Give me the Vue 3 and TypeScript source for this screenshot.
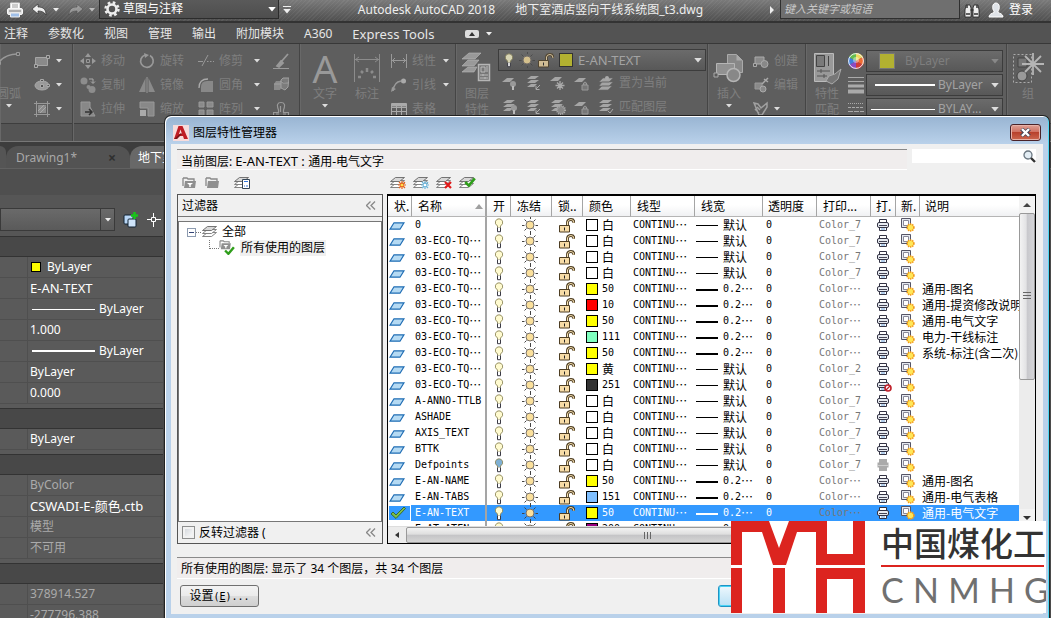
<script setup lang="ts">
import { ref } from 'vue'

interface Layer {
  name: string
  cut?: boolean
  color: string
  colorName: string
  weight: string
  plot: string
  desc?: string
  off?: boolean
  noPlot?: boolean
  grayPlot?: boolean
  current?: boolean
}

const white = { color: '#ffffff', colorName: '白', weight: '', plot: '_7' }
const eco = { name: '03-ECO-TQ', cut: true }
const yellow = { color: '#ffff00', colorName: '50', weight: '0.2', plot: '' }

const layers: Layer[] = [
  { name: '0', ...white },
  { ...eco, ...white },
  { ...eco, ...white },
  { ...eco, ...white },
  { ...eco, ...yellow, desc: '通用-图名' },
  { ...eco, color: '#ff0000', colorName: '10', weight: '0.2', plot: '', desc: '通用-提资修改说明' },
  { ...eco, ...yellow, desc: '通用-电气文字' },
  { ...eco, color: '#7fffbf', colorName: '111', weight: '0.2', plot: '', desc: '电力-干线标注' },
  { ...eco, ...yellow, desc: '系统-标注(含二次)' },
  { ...eco, color: '#ffff00', colorName: '黄', weight: '', plot: '_2' },
  { ...eco, color: '#333333', colorName: '251', weight: '', plot: '', noPlot: true },
  { name: 'A-ANNO-TTLB', ...white },
  { name: 'ASHADE', ...white },
  { name: 'AXIS_TEXT', ...white },
  { name: 'BTTK', ...white },
  { name: 'Defpoints', ...white, off: true, grayPlot: true },
  { name: 'E-AN-NAME', ...yellow, desc: '通用-图名' },
  { name: 'E-AN-TABS', color: '#7fbfff', colorName: '151', weight: '0.2', plot: '', desc: '通用-电气表格' },
  { name: 'E-AN-TEXT', ...yellow, desc: '通用-电气文字', current: true },
  { name: 'E-AT-ATEN', color: '#99007f', colorName: '200', weight: '0.2', plot: '' },
]

const headers = ['状.', '名称', '开', '冻结', '锁..', '颜色', '线型', '线宽', '透明度', '打印...', '打.', '新.', '说明']
const menus = ['注释', '参数化', '视图', '管理', '输出', '附加模块', 'A360', 'Express Tools']

const modify = [
  { icon: 'move', label: '移动' }, { icon: 'rotate', label: '旋转' }, { icon: 'trim', label: '修剪', drop: true }, { icon: 'erase', label: '' },
  { icon: 'copy', label: '复制' }, { icon: 'mirror', label: '镜像' }, { icon: 'fillet', label: '圆角', drop: true }, { icon: 'explode', label: '' },
  { icon: 'stretch', label: '拉伸' }, { icon: 'scale', label: '缩放' }, { icon: 'array', label: '阵列', drop: true }, { icon: 'offset', label: '' },
]
const annotate = [
  { icon: 'linear', label: '线性', drop: true },
  { icon: 'leader', label: '引线', drop: true },
  { icon: 'tablei', label: '表格', drop: false },
]
const layerTools = ['lay-bulb', 'lay-iso', 'lay-frz', 'lay-lock', 'lay-cur']
const layerTools2 = ['lay-on', 'lay-iso', 'lay-thaw', 'lay-lock', 'lay-match']

interface Prop { text: string; line?: number; swatch?: boolean; dim?: boolean; wide?: boolean }
const groups: Prop[][] = [
  [
    { text: 'ByLayer', swatch: true }, { text: 'E-AN-TEXT', wide: true }, { text: 'ByLayer', line: 1 }, { text: '1.000' },
    { text: 'ByLayer', line: 2 }, { text: 'ByLayer' }, { text: '0.000' },
  ],
  [{ text: 'ByLayer' }],
  [{ text: 'ByColor', dim: true }, { text: 'CSWADI-E-颜色.ctb', wide: true }, { text: '模型', dim: true }, { text: '不可用', dim: true }],
  [{ text: '378914.527', dim: true }, { text: '-277796.388', dim: true }],
]

const keyword = ref('')
const layerSearch = ref('')
const invert = ref(false)
</script>

<template>
  <div class="app">
    <svg class="sprite" aria-hidden="true">
      <symbol id="tri" viewBox="0 0 6 4"><path d="M0 0h6L3 3.5z" fill="currentColor" /></symbol>
      <symbol id="printer" viewBox="0 0 16 16">
        <path d="M3.5 1h9v6h-9z" fill="#fff" stroke="#ddd" /><path d="M5 3h6M5 5h6" stroke="#999" />
        <rect x=".5" y="6.5" width="15" height="6" rx="1.5" fill="#e4e4e4" stroke="#f8f8f8" /><path d="M2 9h12" stroke="#777" />
        <path d="M3.5 11h9v4h-9z" fill="#9fbfe8" stroke="#eee" />
      </symbol>
      <symbol id="undo" viewBox="0 0 16 14"><path d="M1 6l6-5v3c5 0 8 2 8 8-2-3-4-4-8-4v3z" fill="#eee" stroke="#333" stroke-width=".7" /></symbol>
      <symbol id="gear" viewBox="0 0 16 16">
        <circle cx="8" cy="8" r="6.5" fill="none" stroke="#eee" stroke-width="2.4" stroke-dasharray="2.6 2.5" />
        <circle cx="8" cy="8" r="4.5" fill="none" stroke="#eee" stroke-width="2.6" />
      </symbol>
      <symbol id="binoc" viewBox="0 0 16 16">
        <path d="M2 3h4l1 3v9H1V8zM14 3h-4L9 6v9h6V8z" fill="#eee" stroke="#222" stroke-width=".8" /><path d="M2 12h4M10 12h4M3 3v3M13 3v3M6.500 8h3" stroke="#333" stroke-width="1.500" />
      </symbol>
      <symbol id="user" viewBox="0 0 16 16">
        <path d="M1 15c0-3 3-3.500 5-4.500V9C4 7 4 1 8 1s4 6 2 8v1.500c2 1 5 1.500 5 4.500z" fill="#dfe3e8" stroke="#fff" />
      </symbol>
      <symbol id="arc" viewBox="0 0 24 16" preserveAspectRatio="xMidYMin"><path d="M1 13C6 7 13 4 20 4" fill="none" stroke="#999" stroke-width="1.500" /><path d="M19.500 2.500h3v3h-3zM.5 11.500h3v3h-3z" fill="#5b5b5b" stroke="#999" /></symbol>
      <symbol id="rect" viewBox="0 0 16 16"><path d="M1.500 4.500h12v8h-12z" fill="#8a8a8a" stroke="#a5a5a5" /><path d="M12.500 2.500h3v3h-3zM.5 11.500h3v3h-3z" fill="#5b5b5b" stroke="#aaa" /></symbol>
      <symbol id="ellipse" viewBox="0 0 16 16"><ellipse cx="8" cy="8.500" rx="7" ry="4.500" fill="#999" stroke="#aaa" /><path d="M6.500 7.500h3v3h-3zM6.500 2.500h3v2h-3zM13 7.500h2.500v2H13z" fill="#555" stroke="#aaa" /></symbol>
      <symbol id="hatch" viewBox="0 0 16 16"><path d="M2.500 0v16M13.500 0v16M0 2.500h16M0 13.500h16" stroke="#999" /><path d="M4 4h8v8H4z" fill="#8c8c8c" /><path d="M4 10l6-6M6 12l6-6" stroke="#aaa" /></symbol>
      <symbol id="move" viewBox="0 0 16 16"><path d="M8 0l3 4H5zM8 16l3-4H5zM0 8l4-3v6zM16 8l-4-3v6z" fill="#999" /><path d="M6.500 6.500h3v3h-3z" fill="none" stroke="#999" /></symbol>
      <symbol id="copy" viewBox="0 0 16 16"><circle cx="4" cy="4" r="3.500" fill="#8d8d8d" /><circle cx="8.500" cy="10" r="2" fill="#8d8d8d" /><circle cx="12" cy="12.500" r="3.500" fill="#8d8d8d" /><path d="M9 2h4v4M11 4.500l2 2 2-2" fill="none" stroke="#aaa" /></symbol>
      <symbol id="stretch" viewBox="0 0 16 16"><path d="M1 1h9v5l5 9H1z" fill="#888" stroke="#999" /><path d="M5 11h7M9 8l3 3-3 3" stroke="#333" fill="none" stroke-width="1.500" /></symbol>
      <symbol id="rotate" viewBox="0 0 16 16"><path d="M6 2a6.300 6.300 0 1 0 5 .5" fill="none" stroke="#999" stroke-width="1.700" /><path d="M5 0l5 2-4 3z" fill="#999" /></symbol>
      <symbol id="mirror" viewBox="0 0 16 16"><path d="M6.500 1v14H0zM9.500 1v14H16z" fill="#8a8a8a" /><path d="M8 0v16" stroke="#999" /></symbol>
      <symbol id="scale" viewBox="0 0 16 16"><path d="M1 1h14v14H9V7H1z" fill="#888" stroke="#999" /><path d="M1 9h6v6H1z" fill="#aaa" /></symbol>
      <symbol id="trim" viewBox="0 0 16 16"><path d="M0 8.500h5M9 8.500h1.500M12 8.500h1.500M15 8.500h1M4 13L10 2" stroke="#999" /></symbol>
      <symbol id="fillet" viewBox="0 0 16 16"><path d="M3 15V10q0-6 6-6h6v11z" fill="#888" /><path d="M1 11Q1 2 10 2" fill="none" stroke="#aaa" stroke-width="1.300" /></symbol>
      <symbol id="array" viewBox="0 0 16 16"><path d="M1 1h5v5H1zM9 1h6v5H9zM1 9h5v6H1zM9 9h6v6H9z" fill="#8a8a8a" stroke="#999" /></symbol>
      <symbol id="erase" viewBox="0 0 16 16"><path d="M15 1L8 9M8 8l2 2-4 4-2-1z" stroke="#999" stroke-width="1.800" fill="#999" /><path d="M0 15.500h16" stroke="#999" /></symbol>
      <symbol id="explode" viewBox="0 0 16 16"><path d="M1 7l2-3h6v6l-2 3H1z" fill="#8a8a8a" /><path d="M8 3l2-2h6l-1 9-3 3-4-2zM1 7h7M7 4L10 6h5" fill="#7c7c7c" stroke="#a0a0a0" /></symbol>
      <symbol id="offset" viewBox="0 0 16 16"><path d="M.5 14.500v-3h5V9Q2.500 1.500 8 1.500T10.500 9v2.500h5v3zM3 13h3M10 13h3M7.500 11V5" fill="none" stroke="#999" stroke-width="1.200" /></symbol>
      <symbol id="linear" viewBox="0 0 16 16"><path d="M.5 1v14M15.500 1v14M1 7.500h14M4 5L1.500 7.500 4 10M12 5l2.500 2.500L12 10" fill="none" stroke="#999" /></symbol>
      <symbol id="leader" viewBox="0 0 16 16"><path d="M2 14Q3 5 10 4" fill="none" stroke="#999" stroke-width="1.500" /><circle cx="12.500" cy="4" r="2.500" fill="#aaa" /><path d="M0 15l1-5 4 2z" fill="#999" /></symbol>
      <symbol id="tablei" viewBox="0 0 16 16"><path d="M.5 2.500h15v12H.5zM1 6.500h14M1 10.500h14M5.500 5v9M10.500 5v9" fill="none" stroke="#aaa" /><path d="M1 3h14v2.500H1z" fill="#aaa" /></symbol>
      <symbol id="dim" viewBox="0 0 28 30"><path d="M1.500 1v28M26.500 1v28M2 6.500h24M6 4L2.500 6.500 6 9M22 4l3.500 2.500L22 9" fill="none" stroke="#8c8c8c" /><path d="M14 15v4M8 18l2 2M20 18l-2 2M5 24h3M20 24h3" stroke="#8c8c8c" stroke-width="2.500" /></symbol>
      <symbol id="stack" viewBox="0 0 32 32">
        <path d="M8 1h12l-6 6H1zM7 8h11l-5 6H1zM7 15h9l-3 5H1z" fill="#999" stroke="#bbb" stroke-width=".6" />
        <path d="M17.500 12.500h11v16h-11z" fill="#777" stroke="#b5b5b5" stroke-width="1.500" /><path d="M20 15h4v5h-4zM26 14v6M19 23h8M19 26h8M22 22v2M24 25v2" fill="none" stroke="#bbb" />
      </symbol>
      <symbol id="lay-bulb" viewBox="0 0 16 16"><path d="M5 3h7l-4 4H0z" fill="#a5a5a5" /><circle cx="11" cy="9" r="3" fill="#999" /><path d="M11 11v4" stroke="#bbb" stroke-width="2" /></symbol>
      <symbol id="lay-iso" viewBox="0 0 16 16"><path d="M5 1h8L9 4H1zM5 5h8l-4 3H1zM5 9h6l-3 3H1z" fill="#a5a5a5" /><path d="M14 10l-4 4m0-3v3.500h3.500" stroke="#aaa" fill="none" /></symbol>
      <symbol id="lay-frz" viewBox="0 0 16 16"><path d="M5 2h7L8 6H0z" fill="#a5a5a5" /><path d="M10 6v9M5.500 10.500h9M7 7.500l6 6M13 7.500l-6 6" stroke="#aaa" stroke-width="1.300" /></symbol>
      <symbol id="lay-lock" viewBox="0 0 16 16"><path d="M5 3h7L8 7H0z" fill="#a5a5a5" /><path d="M8 10h6v5H8zM9.500 10V8q1.500-2 3 0v2" fill="#777" stroke="#999" /></symbol>
      <symbol id="lay-cur" viewBox="0 0 16 16"><path d="M5 3h10l-4 4H1zM4 7h11l-4 4H1zM4 11h10l-4 4H0z" fill="#a5a5a5" stroke="#666" stroke-width=".6" /><circle cx="9" cy="3" r="2" fill="#aaa" /></symbol>
      <symbol id="lay-on" viewBox="0 0 16 16"><path d="M5 1h8L9 4H1zM5 5h8l-4 3H1zM5 9h6l-3 3H1z" fill="#a5a5a5" /><circle cx="12" cy="9" r="3" fill="#999" /><path d="M12 11v4" stroke="#bbb" stroke-width="2" /></symbol>
      <symbol id="lay-thaw" viewBox="0 0 16 16"><path d="M5 1h8L9 4H1zM5 5h8l-4 3H1zM5 9h6l-3 3H1z" fill="#a5a5a5" /><circle cx="11" cy="11" r="4" fill="#888" stroke="#aaa" stroke-dasharray="1 1" stroke-width="2" /></symbol>
      <symbol id="lay-match" viewBox="0 0 16 16"><path d="M5 1h9l-4 3H1zM5 5h9l-4 3H1zM5 9h8l-4 3H1z" fill="#a5a5a5" /><path d="M10 12l2 2 3-4" stroke="#aaa" fill="none" /></symbol>
      <symbol id="insert" viewBox="0 0 32 30"><path d="M14.500 1.500h9l6 6v12h-15z" fill="#888" stroke="#aaa" /><path d="M23.500 1.500v6h6z" fill="#aaa" /><path d="M3.500 10.500h18v11h-18z" fill="#919191" stroke="#b5b5b5" /><circle cx="20.500" cy="22" r="6.500" fill="#888" stroke="#b5b5b5" stroke-width="1.500" /><path d="M1 20h4v4H1z" fill="#5b5b5b" stroke="#aaa" /></symbol>
      <symbol id="create" viewBox="0 0 16 16"><path d="M2 4h9v7H2z" fill="#8a8a8a" stroke="#aaa" /><circle cx="11.500" cy="11" r="3.500" fill="#888" stroke="#aaa" /><path d="M.5 10.500h3v3h-3z" fill="#5b5b5b" stroke="#aaa" /></symbol>
      <symbol id="edit" viewBox="0 0 16 16"><path d="M2 6h7v6H2z" fill="#8a8a8a" stroke="#999" /><circle cx="10" cy="12" r="3" fill="#888" stroke="#aaa" /><path d="M9 7l6-6M11 2l4 3" stroke="#aaa" stroke-width="1.500" /></symbol>
      <symbol id="attr" viewBox="0 0 16 16"><path d="M1 2l4 1 3 4 6-5v4l-5 8H6zM2 8l4 4M4 6l3 3" fill="none" stroke="#a0a0a0" stroke-width="1.500" /></symbol>
      <symbol id="match" viewBox="0 0 32 32"><path d="M3.500 1.500h19v28h-19z" fill="#999" stroke="#bbb" /><path d="M5.500 3.500h8v11h-8zM17.500 4v10" fill="#7a7a7a" stroke="#444" /><path d="M6 19h13M6 24h10M10 17v4M13 22v4" stroke="#555" /><path d="M30 17l-6 5-6 2-3 5 6 3 6-5z" fill="#777" stroke="#aaa" /></symbol>
      <symbol id="group" viewBox="0 0 32 32"><path d="M1.500 2.500h18v28h-18z" fill="none" stroke="#aaa" stroke-dasharray="2 2" /><path d="M6 6h9v9H6z" fill="#777" stroke="#444" /><circle cx="10" cy="24" r="5" fill="#999" stroke="#444" /><path d="M21 1v22M10 12h22M13 4l16 16M29 4L13 20" stroke="#b5b5b5" stroke-width="1.800" /></symbol>
      <symbol id="wheel" viewBox="0 0 16 16">
        <path d="M8 8V0a8 8 0 0 1 7 4z" fill="#efd95c" /><path d="M8 8l7-4a8 8 0 0 1 0 8z" fill="#f06b32" /><path d="M8 8l7 4a8 8 0 0 1-7 4z" fill="#d23a3a" />
        <path d="M8 8v8a8 8 0 0 1-7-4z" fill="#8b4bc4" /><path d="M8 8l-7 4a8 8 0 0 1 0-8z" fill="#3d7fe0" /><path d="M8 8L1 4a8 8 0 0 1 7-4z" fill="#65bd4d" /><circle cx="8" cy="8" r="7.400" fill="none" stroke="#eee" /><circle cx="8" cy="7" r="3" fill="#fff" opacity=".4" />
      </symbol>
      <symbol id="lw" viewBox="0 0 16 18"><path d="M0 1.500h16M0 5.500h16" stroke="#aaa" /><path d="M0 10h16" stroke="#aaa" stroke-width="3" /><path d="M0 15.500h16" stroke="#aaa" stroke-width="4" /></symbol>
      <symbol id="lt" viewBox="0 0 16 16"><path d="M0 2.500h16" stroke="#aaa" stroke-dasharray="1 1" /><path d="M0 6.500h16" stroke="#aaa" stroke-dasharray="3 1" /><path d="M0 10.500h16" stroke="#aaa" stroke-dasharray="5 1" /><path d="M0 14.500h16" stroke="#aaa" /></symbol>
      <symbol id="bulb" viewBox="0 0 10 15"><path d="M3.500 9.500V8Q.5 6 1.500 3.200 2.500 .8 5 .8t3.500 2.400Q9.500 6 6.500 8v1.500z" fill="var(--b, #fffbd0)" stroke="#8d8758" stroke-width=".9" /><path d="M3.500 9.500v4.200h3V9.500" fill="#fff" stroke="#3a3a44" /></symbol>
      <symbol id="sun" viewBox="0 0 16 16"><path d="M8.500 0v2M8.500 14v2M0 8.500h2.500M13.500 8.500H16M2.500 2.500l2 2M13.500 2.500l-2 2M2.500 13.500l2-2M13.500 13.500l-2-2" stroke="#444" /><circle cx="8" cy="8" r="4" fill="#fbe09c" stroke="#77706a" /></symbol>
      <symbol id="lock" viewBox="0 0 16 15"><path d="M8.500 7V4Q9 1.500 12 1.500T15 5" fill="none" stroke="#4d3d22" stroke-width="2.800" /><path d="M8.500 7V4Q9 1.500 12 1.500T15 5" fill="none" stroke="#f5dfae" stroke-width="1" /><path d="M.5 7.500h10v6.500H.5z" fill="#f7dca6" stroke="#4d3d22" /><path d="M5.500 9.500v3" stroke="#222" /></symbol>
      <symbol id="sheet" viewBox="0 0 16 8"><path d="M5 .8h10L11 7.200H1z" fill="#b5daf3" stroke="#1f6db4" stroke-width="1.200" /></symbol>
      <symbol id="check" viewBox="0 0 16 12"><path d="M1 7l2-2 3 3 8-8 1.500 1.500L6 11.500z" fill="#7cbf4c" stroke="#2c5b1a" stroke-width=".8" /></symbol>
      <symbol id="prn" viewBox="0 0 12 12"><path d="M2.500 3.500v-3h7v3M2.500 8.500v3h7v-3" fill="#fff" stroke="#334" /><rect x=".5" y="3.500" width="11" height="5" rx="1.500" fill="#e8ecf2" stroke="#334" /><path d="M2 6.500h8" stroke="#445" /><path d="M4 10h4" stroke="#6b9fd8" /></symbol>
      <symbol id="prngray" viewBox="0 0 12 12"><path d="M2 0h8v3.500h1.500v5H10V12H2V8.500H.5v-5H2z" fill="#aaa" /><path d="M1 6.500h10" stroke="#ccc" /></symbol>
      <symbol id="ban" viewBox="0 0 8 8"><circle cx="4" cy="4" r="3" fill="#fff" stroke="#c0202a" stroke-width="1.600" /><path d="M6 2L2 6" stroke="#c0202a" stroke-width="1.300" /></symbol>
      <symbol id="vp" viewBox="0 0 14 14"><path d="M.5.500h9v9h-9z" fill="#e5e9f0" stroke="#556" /><path d="M2.500 2.500h5v5h-5z" fill="#fff" stroke="#889" /><circle cx="9.500" cy="9.500" r="3.300" fill="#ffd52a" stroke="#f29a1c" stroke-dasharray="1.300 .8" stroke-width="1.800" /><circle cx="9.500" cy="9.500" r="2.500" fill="#ffe75a" /></symbol>
      <symbol id="folder" viewBox="0 0 14 12"><path d="M1 1h4l1 1h6v2M1 1v8" fill="none" stroke="#888" stroke-width="1.300" /><path d="M3 4h11l-1 7H2z" fill="#8f8f8f" /></symbol>
      <symbol id="folderf" viewBox="0 0 14 12"><path d="M1 1h4l1 1h6v2M1 1v8" fill="none" stroke="#888" stroke-width="1.300" /><path d="M3 4h11l-1 7H2z" fill="#8f8f8f" /><path d="M5 6h6L8.700 8v2H7.300V8z" fill="#fff" /></symbol>
      <symbol id="lyr" viewBox="0 0 18 14"><path d="M6.500 7.500h9l-5 4H1.500z" fill="#fff" stroke="#777" stroke-width=".9" /><path d="M6.500 4.500h9l-5 4H1.500z" fill="#fff" stroke="#777" stroke-width=".9" /><path d="M6.500 1.500h9l-5 4H1.500z" fill="#d8d8d8" stroke="#666" stroke-width=".9" /></symbol>
      <symbol id="spark" viewBox="0 0 8 8"><path d="M4 0v8M0 4h8M1 1l6 6M7 1L1 7" stroke="currentColor" stroke-width="1.200" /><circle cx="4" cy="4" r="1.300" fill="var(--core, #fff)" /></symbol>
      <symbol id="xmark" viewBox="0 0 8 8"><path d="M1 1l6 6M7 1L1 7" stroke="#e21b1b" stroke-width="2.200" /></symbol>
      <symbol id="tick" viewBox="0 0 10 8"><path d="M1 4l3 3 5-6" fill="none" stroke="#2f9e1b" stroke-width="2.200" /></symbol>
      <symbol id="cfg" viewBox="0 0 8 10"><path d="M.5.500h7v9h-7z" fill="#fff" stroke="#345" /><path d="M2 2.500h4M2 7h1M4 7h2" stroke="#37d" /></symbol>
      <symbol id="lens" viewBox="0 0 13 13"><circle cx="5" cy="5" r="4" fill="#e3edf4" stroke="#6a7680" stroke-width="1.300" /><path d="M8 8l4 4" stroke="#333" stroke-width="2.400" /></symbol>
      <symbol id="chev" viewBox="0 0 10 9"><path d="M4.500.500l-4 4 4 4M9 .5l-4 4 4 4" fill="none" stroke="#888" stroke-width="1.300" /></symbol>
      <symbol id="acad" viewBox="0 0 16 16"><path d="M0 0h16v16H0z" fill="#f7dcdc" /><path d="M5.500 1h4L15 14h-4l-1-3H5l-1 3H1zM7.500 4.500L6 9h3z" fill="#bf1d25" fill-rule="evenodd" /><path d="M1 14l7-6 1 1-5 5z" fill="#7e1016" /></symbol>
      <symbol id="quick" viewBox="0 0 16 16"><rect x="1" y="3" width="9" height="9" rx="1" fill="#b9d6f5" stroke="#123" /><rect x="5" y="7" width="8" height="8" rx="1" fill="#cfe4fa" stroke="#123" /><path d="M11.500 0v7M8 3.500h7" stroke="#19c419" stroke-width="2.500" /></symbol>
      <symbol id="cross" viewBox="0 0 14 14"><path d="M6.500 0v4M6.500 9v5M0 6.500h4M9 6.500h5M4.500 4.500h4v4h-4z" fill="none" stroke="#fff" /></symbol>
    </svg>

    <header class="title">
      <button class="tb" aria-label="打印"><svg width="16" height="16"><use href="#printer" /></svg></button>
      <button class="tb undo" aria-label="放弃"><svg width="16" height="14"><use href="#undo" /></svg></button>
      <svg class="tri" width="6" height="4"><use href="#tri" /></svg>
      <button class="tb redo" aria-label="重做"><svg width="16" height="14"><use href="#undo" /></svg></button>
      <svg class="tri dimtri" width="6" height="4"><use href="#tri" /></svg>
      <div class="ws">
        <svg width="16" height="16"><use href="#gear" /></svg>
        <select aria-label="工作空间"><option>草图与注释</option></select>
        <svg width="8" height="5"><use href="#tri" /></svg>
      </div>
      <button class="tb custom" aria-label="自定义"><i></i><svg width="8" height="5"><use href="#tri" /></svg></button>
      <div class="caption"><span>Autodesk AutoCAD 2018</span><span>地下室酒店竖向干线系统图_t3.dwg</span></div>
      <i class="play"></i>
      <input v-model="keyword" class="kw" placeholder="键入关键字或短语" aria-label="搜索">
      <svg class="bin" width="16" height="16"><use href="#binoc" /></svg>
      <button class="login"><svg width="16" height="16"><use href="#user" /></svg>登录</button>
    </header>

    <nav class="menu">
      <a v-for="m in menus" :key="m" href="#" :class="{ wide: /^E/.test(m) }">{{ m }}</a>
      <button class="mini" aria-label="最小化"><i></i><svg width="6" height="4"><use href="#tri" /></svg></button>
    </nav>

    <section class="ribbon">
      <div class="panel p1">
        <button class="big arcb"><svg width="24" height="36"><use href="#arc" /></svg><span>圆弧</span><svg width="6" height="4" class="lt"><use href="#tri" /></svg></button>
        <div class="col">
          <button v-for="i in ['rect', 'ellipse', 'hatch']" :key="i" class="small" :aria-label="i"><svg width="16" height="16"><use :href="'#' + i" /></svg><svg width="6" height="4" class="lt"><use href="#tri" /></svg></button>
        </div>
      </div>
      <div class="panel p2">
        <button v-for="b in modify" :key="b.icon" class="small" :aria-label="b.label || b.icon">
          <svg width="16" height="16"><use :href="'#' + b.icon" /></svg><span v-if="b.label">{{ b.label }}</span>
          <svg v-if="b.drop" class="lt drop" width="6" height="4"><use href="#tri" /></svg>
        </button>
      </div>
      <div class="panel p3">
        <button class="big"><span class="A">A</span><span>文字</span><svg width="6" height="4" class="lt"><use href="#tri" /></svg></button>
        <button class="big"><svg width="28" height="36"><use href="#dim" /></svg><span>标注</span></button>
        <div class="col">
          <button v-for="b in annotate" :key="b.icon" class="small"><svg width="16" height="16"><use :href="'#' + b.icon" /></svg><span>{{ b.label }}</span><svg v-if="b.drop" class="lt" width="6" height="4"><use href="#tri" /></svg></button>
        </div>
      </div>
      <div class="panel p4">
        <button class="big"><svg width="32" height="36"><use href="#stack" /></svg><span>图层<br>特性</span></button>
        <div class="laycol">
          <div class="combo layc">
            <svg class="db" width="10" height="15"><use href="#bulb" /></svg><svg class="db sunr" width="16" height="16"><use href="#sun" /></svg><svg class="db" width="16" height="15"><use href="#lock" /></svg>
            <i class="sw"></i><select aria-label="图层" class="wide"><option>E-AN-TEXT</option></select><svg class="lt" width="8" height="5"><use href="#tri" /></svg>
          </div>
          <div class="tools"><svg v-for="t in layerTools" :key="t" width="16" height="16"><use :href="'#' + t" /></svg><span>置为当前</span></div>
          <div class="tools"><svg v-for="t in layerTools2" :key="t" width="16" height="16"><use :href="'#' + t" /></svg><span>匹配图层</span></div>
        </div>
      </div>
      <div class="panel p5">
        <button class="big"><svg width="32" height="36"><use href="#insert" /></svg><span>插入</span><svg width="6" height="4" class="lt"><use href="#tri" /></svg></button>
        <div class="col">
          <button class="small"><svg width="16" height="16"><use href="#create" /></svg><span>创建</span></button>
          <button class="small"><svg width="16" height="16"><use href="#edit" /></svg><span>编辑</span></button>
          <button class="small" aria-label="属性"><svg width="16" height="16"><use href="#attr" /></svg><svg class="lt" width="6" height="4"><use href="#tri" /></svg></button>
        </div>
      </div>
      <div class="panel p6">
        <button class="big"><svg width="32" height="36"><use href="#match" /></svg><span>特性<br>匹配</span></button>
        <div class="props">
          <svg width="16" height="16"><use href="#wheel" /></svg>
          <div class="combo off"><i class="sw"></i><select aria-label="颜色"><option>ByLayer</option></select><svg class="lt" width="8" height="5"><use href="#tri" /></svg></div>
          <svg width="16" height="18"><use href="#lw" /></svg>
          <div class="combo"><i class="ln"></i><select aria-label="线宽"><option>ByLayer</option></select><svg class="lt" width="8" height="5"><use href="#tri" /></svg></div>
          <svg width="16" height="16"><use href="#lt" /></svg>
          <div class="combo"><i class="ln long"></i><select aria-label="线型"><option>BYLAY...</option></select><svg class="lt" width="8" height="5"><use href="#tri" /></svg></div>
        </div>
      </div>
      <div class="panel p7">
        <button class="big"><svg width="32" height="36"><use href="#group" /></svg><span>组</span></button>
      </div>
    </section>

    <div class="tabs">
      <i class="prev"></i>
      <button class="tab">Drawing1*<b>×</b></button>
      <button class="tab on">地下室酒店</button>
    </div>

    <aside class="palette">
      <div class="band"></div>
      <div class="pick">
        <div class="pcombo"><select aria-label="对象"><option></option></select><span><svg width="6" height="4"><use href="#tri" /></svg></span></div>
        <svg width="16" height="16"><use href="#quick" /></svg><svg width="14" height="14"><use href="#cross" /></svg>
      </div>
      <div v-for="(g, gi) in groups" :key="gi" class="grp">
        <div class="ghead"></div>
        <div v-for="(p, i) in g" :key="i" class="prow">
          <span class="plabel"></span>
          <span class="pval" :class="{ dim: p.dim, wide: p.wide }"><i v-if="p.swatch" class="psw"></i><i v-if="p.line" :class="['pln', { thick: p.line === 2 }]"></i>{{ p.text }}</span>
        </div>
      </div>
    </aside>

    <div class="dialog" role="dialog" aria-label="图层特性管理器">
      <div class="dtitle">
        <svg width="16" height="16"><use href="#acad" /></svg><h1>图层特性管理器</h1>
        <button class="close" aria-label="关闭"><svg width="11" height="9" viewBox="0 0 11 9"><path d="M1.500 1l8 7M9.500 1l-8 7" stroke="#445" stroke-width="4" /><path d="M2 1l7 7M9 1L2 8" stroke="#fff" stroke-width="2.400" /></svg></button>
      </div>
      <div class="dbody">
        <div class="toprow">
          <div class="field">当前图层: <span class="wide">E-AN-TEXT : </span>通用-电气文字</div>
          <label class="find"><input v-model="layerSearch" aria-label="搜索图层"><svg width="13" height="13"><use href="#lens" /></svg></label>
        </div>
        <div class="bar">
          <div class="barl">
            <button aria-label="新建特性过滤器"><svg width="14" height="12"><use href="#folderf" /></svg></button>
            <button aria-label="新建组过滤器"><svg width="14" height="12"><use href="#folder" /></svg></button>
            <button class="mgr" aria-label="图层状态管理器"><svg width="18" height="14"><use href="#lyr" /><use href="#cfg" x="9" y="3" width="8" height="10" /></svg></button>
          </div>
          <div class="barr">
            <button aria-label="新建图层"><svg width="18" height="14"><use href="#lyr" /><use href="#spark" class="org" x="9" y="5" width="8" height="8" /></svg></button>
            <button aria-label="冻结的新图层"><svg width="18" height="14"><use href="#lyr" /><use href="#spark" class="blu" x="9" y="5" width="8" height="8" /></svg></button>
            <button aria-label="删除图层"><svg width="18" height="14"><use href="#lyr" /><use href="#xmark" x="9" y="5" width="8" height="8" /></svg></button>
            <button aria-label="置为当前"><svg width="18" height="14"><use href="#lyr" /><use href="#tick" x="6" y="1" width="12" height="10" /></svg></button>
          </div>
        </div>

        <div class="panes">
          <div class="filter">
            <div class="fhead">过滤器<svg width="10" height="9"><use href="#chev" /></svg></div>
            <div class="tree">
              <div class="node"><i class="minus"></i><i class="dots"></i><svg width="18" height="14"><use href="#lyr" /></svg><span>全部</span></div>
              <div class="node sub"><i class="elbow"></i><svg width="18" height="16"><use href="#folderf" width="12" height="10" /><use href="#tick" x="5" y="6" width="11" height="9" /></svg><span class="sel">所有使用的图层</span></div>
            </div>
            <div class="ffoot"><label><input v-model="invert" type="checkbox">反转过滤器 (</label><svg width="10" height="9"><use href="#chev" /></svg></div>
          </div>

          <div class="list">
            <div class="lmain">
              <div class="scroll">
                <table>
                  <colgroup><col v-for="(h, i) in headers" :key="h" :class="'c' + i"></colgroup>
                  <thead><tr><th v-for="h in headers" :key="h"><div>{{ h }}<i v-if="h === '名称'"></i></div></th></tr></thead>
                  <tbody>
                    <tr v-for="(l, i) in layers" :key="i" :class="{ cur: l.current }">
                      <td class="st"><div v-if="l.current" class="focus"><svg width="16" height="12"><use href="#check" /></svg></div><svg v-else width="16" height="8"><use href="#sheet" /></svg></td>
                      <td class="nm">{{ l.name }}<span v-if="l.cut">…</span></td>
                      <td class="ic" :class="{ boff: l.off }"><svg width="10" height="15"><use href="#bulb" /></svg></td>
                      <td class="ic"><svg width="16" height="16"><use href="#sun" /></svg></td>
                      <td class="lk"><svg width="16" height="15"><use href="#lock" /></svg></td>
                      <td class="cl"><i :style="{ background: l.color }"></i><span v-if="/\D/.test(l.colorName)">{{ l.colorName }}</span><template v-else>{{ l.colorName }}</template></td>
                      <td>CONTINU<span>…</span></td>
                      <td class="wt" :class="{ heavy: l.weight }"><i></i><template v-if="l.weight">{{ l.weight }}<span>…</span></template><span v-else>默认</span></td>
                      <td class="tr">0</td>
                      <td class="pl">Color{{ l.plot }}<span v-if="!l.plot">…</span></td>
                      <td class="pr"><svg width="18" height="14"><use :href="l.grayPlot ? '#prngray' : '#prn'" x="2" y="1" width="12" height="12" /><use v-if="l.noPlot" href="#ban" x="9" y="6" width="8" height="8" /></svg></td>
                      <td class="ic"><svg width="14" height="14"><use href="#vp" /></svg></td>
                      <td class="ds"><span>{{ l.desc }}</span></td>
                    </tr>
                  </tbody>
                </table>
              </div>
              <div class="hbar"><button aria-label="向左"><i></i></button><div class="thumb"><i></i></div></div>
            </div>
            <div class="vbar"><button class="up" aria-label="向上"><i></i></button><div class="thumb"><i></i></div><button class="down" aria-label="向下"><i></i></button></div>
          </div>
        </div>

        <div class="status">所有使用的图层: 显示了 34 个图层，共 34 个图层</div>
        <div class="actions"><button class="setb">设置<span>(<u>E</u>)...</span></button><button class="apply" aria-label="应用"></button></div>
      </div>
    </div>

    <div class="brand">
      <svg width="134" height="92" viewBox="0 0 134 92" fill="#dc241f">
        <path d="M0 0H38L48 27 58 0H96V33H122V0H134V44H85V11H66L55 44H42L31 11H11V44H0ZM0 47H11V92H0ZM42 47H54V92H42ZM85 47H134V92H122V58H96V92H85Z" />
      </svg>
      <div class="bt"><div class="cn">中国煤化工</div><hr><div class="en"><span v-for="c in 'CNMHG'" :key="c">{{ c }}</span></div></div>
    </div>
  </div>
</template>

<style>
html, body { margin: 0; background: #000; }
</style>

<style scoped>
.app { position: relative; height: 100vh; overflow: hidden; display: flex; flex-direction: column; background: #4b4b4b; color: #eee; font: 12px/16px "Noto Sans", "Noto Sans CJK SC", sans-serif; }
.app *, .app *::before, .app *::after { box-sizing: border-box; }
.sprite { position: absolute; width: 0; height: 0; }
button { font: inherit; color: inherit; background: none; border: 0; padding: 0; margin: 0; }
select { appearance: none; background: none; border: 0; padding: 0; margin: 0; font: inherit; color: inherit; flex: 1; min-width: 0; outline: 0; }
input { font: inherit; }
svg { flex: none; display: block; }
i { font-style: normal; flex: none; }
.app .wide { font-size: 13px; }

.title { flex: none; height: 23px; display: flex; align-items: center; padding: 0 18px 2px 7px; border-bottom: 2px solid #333; background: repeating-linear-gradient(135deg, rgba(255,255,255,.05) 0 1px, transparent 1px 3px), linear-gradient(#7a7a7a, #606060 60%, #505050); }
.tb { display: flex; }
.undo { margin-left: 8px; }
.tri { margin-left: 6px; }
.redo { margin-left: 9px; opacity: .35; transform: scaleX(-1); }
.dimtri { color: #bbb; margin-left: 5px; }
.ws { align-self: stretch; display: flex; align-items: center; gap: 3px; width: 180px; flex: none; margin-left: 4px; padding: 0 2px 0 4px; border: 1px solid #2c2c2c; border-top: 0; background: linear-gradient(#5a5a5a, #4e4e4e); font-size: 12px; color: #fff; }
.custom { margin-left: 4px; flex-direction: column; gap: 2px; align-items: center; }
.custom i { width: 8px; height: 1px; background: #eee; }
.caption { flex: 1; display: flex; gap: 20px; justify-content: center; white-space: nowrap; }
.play { border: 4px solid transparent; border-left-color: #eee; border-right: 0; margin-right: 6px; }
.kw { align-self: stretch; width: 180px; flex: none; margin: 0; padding: 0 3px; border: 1px solid #2f2f2f; border-top: 0; background: #6f6f6f; color: #fff; font-size: 11px; outline: 0; }
.kw::placeholder { color: #c8c8c8; font-style: italic; }
.bin { margin-left: 4px; }
.login { display: flex; align-items: center; gap: 5px; margin-left: 8px; color: #fff; white-space: nowrap; }

.menu { flex: none; height: 21px; display: flex; align-items: center; gap: 20px; padding: 2px 4px 0; background: #535353; border-bottom: 1px solid #383838; }
.menu a { color: #e6e6e6; text-decoration: none; white-space: nowrap; }
.mini { display: flex; align-items: center; gap: 7px; margin-left: 11px; }
.mini i { width: 14px; height: 8px; border-radius: 2px; background: #ddd; display: grid; place-items: center; }
.mini i::after { content: ""; border: 3px solid transparent; border-top: 0; border-bottom: 4px solid #333; }

.ribbon { flex: none; display: flex; height: 98px; background: linear-gradient(#5e5e5e 0 79px, #3e3e3e 79px 80px, #545454 80px); border-bottom: 1px solid #777; color: #7e7e7e; overflow: hidden; }
.panel { display: flex; flex: none; padding-top: 5px; border-right: 1px solid #454545; box-shadow: inset 1px 0 #686868; height: 97px; }
.big { display: flex; flex-direction: column; align-items: center; width: 42px; flex: none; height: 72px; padding-top: 1px; line-height: 16px; }
.big > .lt { margin-top: 2px; }
.big .A { font: 39px/36px "Noto Sans"; color: #999; }
.lt { color: #ddd; }
.col { display: flex; flex-direction: column; }
.small { display: flex; align-items: center; gap: 5px; height: 24px; white-space: nowrap; }
.p1 { width: 73px; }
.arcb { margin-left: -12px; }
.p1 .col { margin-left: 4px; }
.p1 .small { gap: 6px; }
.p2 { width: 227px; display: grid; grid-template-columns: 59px 59px 75px 20px; grid-template-rows: repeat(3, 24px); padding-left: 7px; justify-content: start; }
.p2 .drop { margin-left: 6px; }
.p3 { width: 156px; padding-left: 4px; }
.p3 .col { margin-left: 3px; }
.p3 .lt { margin-left: 2px; }
.p3 .big .lt { margin-left: 0; }
.p4 { width: 252px; }
.laycol { display: flex; flex-direction: column; width: 208px; }
.combo { display: flex; align-items: center; height: 22px; border: 1px solid #3c3c3c; background: linear-gradient(#6b6b6b, #585858); color: #a3a3a3; padding: 0 3px 0 5px; }
.layc .sw { width: 14px; height: 14px; background: #b2b131; border: 1px solid #333; margin: 0 5px; }
.layc .sunr { margin: 0 3px 0 5px; }
.db { opacity: .75; }
.tools { display: flex; align-items: center; height: 24px; gap: 8px; padding-left: 4px; white-space: nowrap; }
.tools span { margin-left: -3px; }
.p5 { width: 98px; }
.p5 .col { margin-left: 3px; }
.p6 { width: 201px; }
.props { flex: 1; display: grid; grid-template-columns: 16px 1fr; grid-auto-rows: 24px; column-gap: 2px; padding-right: 3px; align-items: center; }
.props .combo.off { padding-left: 12px; color: #7e7e7e; }
.off .sw { width: 16px; height: 16px; background: #b2b131; border: 1px solid #777; margin-right: 10px; }
.off .lt { color: #888; }
.ln { width: 60px; height: 2px; background: #fff; margin: 0 3px; }
.long { width: 64px; height: 1px; margin-left: -1px; }
.p7 { flex: 1; border-right: 0; }

.tabs { flex: none; display: flex; align-items: flex-end; height: 27px; background: #3d3d3d; border-bottom: 1px solid #616161; }
.prev { width: 6px; height: 22px; background: #555; border-radius: 0 8px 0 0; }
.tab { height: 22px; background: #535353; color: #a8a8a8; border-radius: 12px 12px 0 0; width: 124px; display: flex; align-items: center; justify-content: space-between; padding: 2px 14px 0 10px; flex: none; }
.tab b { font-size: 14px; color: #2f2f2f; }
.tab.on { background: #686868; color: #fff; padding: 2px 8px 0; }

.palette { flex: 1; min-height: 0; width: 163px; overflow: hidden; background: #5a5a5a; }
.band { height: 26px; background: #4f4f4f; }
.pick { height: 41px; display: flex; align-items: center; gap: 8px; padding-top: 8px; background: #565656; }
.pcombo { width: 115px; height: 23px; display: flex; border: 1px solid #3a3a3a; background: linear-gradient(#6a6a6a, #5a5a5a); }
.pcombo span { width: 14px; border-left: 1px solid #3a3a3a; display: grid; place-items: center; }
.grp { padding-bottom: 4px; }
.ghead { height: 21px; background: #484848; border: 1px solid #333; border-width: 1px 0; }
.prow { height: 21px; display: flex; border-bottom: 1px solid #4f4f4f; white-space: nowrap; }
.plabel { width: 28px; border-right: 1px solid #4f4f4f; flex: none; }
.pval { display: flex; align-items: center; padding-left: 2px; color: #fff; }
.dim { color: #aaa; }
.psw { width: 10px; height: 10px; background: #ff0; border: 1px solid #000; margin: 0 6px 0 1px; }
.pln { width: 63px; height: 1px; background: #fff; margin: 0 4px 0 2px; }
.thick { height: 2px; }

.dialog { position: absolute; left: 164px; right: 1px; top: 115px; bottom: 0; display: flex; flex-direction: column; padding: 0 6px 4px; border: 1px solid #222; border-bottom: 0; border-radius: 7px 7px 0 0; background: linear-gradient(#98b4d2, #b9d1ea 28px); box-shadow: inset 1px 1px #fff, inset -1px 0 #4fd8f4; color: #000; }
.dtitle { height: 28px; flex: none; display: flex; align-items: center; gap: 4px; padding: 5px 2px 0; }
.dtitle h1 { margin: 0; font: inherit; flex: 1; }
.close { width: 31px; height: 17px; border: 1px solid #4a2329; border-radius: 3px; background: linear-gradient(#dfa196, #cf6f5f 48%, #b8412c 50%, #cc6850); box-shadow: inset 0 0 0 1px #e7b2a8; display: grid; place-items: center; }
.dbody { flex: 1; min-height: 0; display: flex; flex-direction: column; background: #f0f0f0; padding: 5px 7px 7px 6px; }
.toprow { display: flex; gap: 5px; align-items: flex-start; }
.field, .status { flex: 1; height: 21px; line-height: 18px; padding: 2px 5px 0 4px; background: #f0eded; border-top: 1px solid #8a8a8a; border-bottom: 1px solid #fff; white-space: nowrap; overflow: hidden; }
.field .wide { white-space: pre; }
.find { display: flex; width: 124px; height: 14px; background: #fff; align-items: center; }
.find input { flex: 1; min-width: 0; height: 14px; border: 0; padding: 0; outline: 0; background: none; }
.bar { height: 24px; flex: none; display: flex; align-items: center; padding-top: 2px; }
.barl, .barr { display: flex; }
.barl { width: 212px; padding-left: 5px; gap: 9px; align-items: center; }
.mgr { margin-left: 5px; }
.barr { gap: 5px; }
.org { color: #e8641b; --core: #ffe04a; }
.blu { color: #6ab5dc; }

.panes { flex: 1; min-height: 0; display: flex; gap: 4px; }
.filter { width: 206px; flex: none; display: flex; flex-direction: column; border: 1px solid #555; }
.fhead { height: 22px; flex: none; display: flex; align-items: center; justify-content: space-between; padding: 0 6px 0 4px; border-bottom: 1px solid #777; }
.tree { flex: 1; margin-top: 4px; background: #fff; border: 1px solid #777; padding: 2px 0 0 8px; }
.node { display: flex; align-items: center; height: 16px; }
.minus { width: 9px; height: 9px; border: 1px solid #8d9bb0; display: grid; place-items: center; }
.minus::after { content: ""; width: 5px; height: 1px; background: #347; }
.dots { width: 5px; border-top: 1px dotted #777; }
.node svg { margin-right: 3px; }
.sub { padding-left: 22px; }
.elbow { width: 10px; height: 9px; align-self: flex-start; border: 1px dotted #777; border-width: 0 0 1px 1px; }
.sel { background: #f0f0f0; padding: 0 1px; }
.ffoot { height: 21px; flex: none; display: flex; align-items: center; justify-content: space-between; padding: 0 6px 0 4px; }
.ffoot label { display: flex; align-items: center; gap: 4px; }
.ffoot input { appearance: none; width: 13px; height: 13px; margin: 0; border: 1px solid #8e8f8f; background: linear-gradient(135deg, #cfd3d8, #fff); box-shadow: inset 0 0 0 2px #f2f2f2; }

.list { flex: 1; min-width: 0; display: flex; border: 1px solid #000; border-top-width: 2px; background: #fff; }
.lmain { flex: 1; min-width: 0; display: flex; flex-direction: column; }
.scroll { flex: 1; min-height: 0; overflow: hidden; }
table { table-layout: fixed; width: 100%; border-collapse: separate; border-spacing: 0; }
.c0, .c2, .c11 { width: 24px; }
.c1 { width: 75px; }
.c3 { width: 41px; }
.c4 { width: 31px; }
.c5 { width: 48px; }
.c6 { width: 64px; }
.c7 { width: 68px; }
.c8, .c9 { width: 54px; }
.c10 { width: 25px; }
th { padding: 0; height: 21px; font-weight: 400; text-align: left; background: linear-gradient(#fff 45%, #f0f1f3); border-right: 1px solid #a5a5a5; border-bottom: 1px solid #b5b5b5; overflow: hidden; white-space: nowrap; }
th:last-child { border-right: 0; }
th:nth-child(2), td:nth-child(2) { border-right: 2px solid #a5a5a5; }
th div { display: flex; align-items: center; padding-left: 6px; line-height: 16px; font-family: "Noto Sans CJK SC", sans-serif; }
th:nth-child(n + 11) div, th:nth-child(9) div { padding-left: 5px; }
th div i { border: 4px solid transparent; border-top: 0; border-bottom: 5px solid #a0a0a0; margin-left: auto; margin-right: 2px; }
td { height: 16px; padding: 0 0 0 2px; font: 10px/16px "DejaVu Sans Mono", monospace; white-space: nowrap; overflow: hidden; }
td span { display: inline-block; font: 12px/16px "Noto Sans CJK SC", sans-serif; vertical-align: top; }
td svg { margin: 0 auto; }
td.st { padding: 0; }
.st > svg { margin: 2px 0 0 1px; }
.focus { height: 16px; width: 23px; border: 1px solid #fff; display: flex; align-items: center; }
.focus svg { margin: 0 1px; }
.nm { padding-left: 3px; }
td.ic { padding: 0; }
td:nth-child(4) svg { margin-left: 11px; }
.boff { --b: #7fb0d4; }
td.lk { padding: 0 0 0 7px; }
.lk svg { margin: 0; }
.cl i { display: inline-block; width: 12px; height: 12px; border: 1px solid #000; margin: 2px 4px 0 1px; vertical-align: top; }
.wt i { display: inline-block; width: 22px; height: 1px; background: currentColor; margin: 8px 5px 0 -1px; vertical-align: top; }
.heavy i { height: 2px; }
.tr { padding-left: 3px; }
.pl { color: #777; }
td.pr { padding: 0; }
.cur { background: #3399ff; color: #fff; }
.hbar { height: 17px; flex: none; display: flex; background: #ececec; border-top: 1px solid #ddd; }
.hbar button { width: 18px; display: grid; place-items: center; }
.hbar button i { border: 3px solid transparent; border-left: 0; border-right: 4px solid #333; }
.hbar .thumb { flex: 1; border: 1px solid #999; border-radius: 2px; background: linear-gradient(#f3f3f3, #dedede 45%, #c4c4c6 50%, #d5d5d5); display: grid; place-items: center; padding-right: 130px; }
.hbar .thumb i { width: 8px; height: 7px; background: repeating-linear-gradient(90deg, #666 0 1px, transparent 1px 3px); }
.vbar { width: 16px; flex: none; display: flex; flex-direction: column; background: #ececec; }
.vbar button { height: 17px; flex: none; display: grid; place-items: center; background: #f3f3f3; }
.vbar button i { border: 4px solid transparent; }
.vbar .up i { border-top: 0; border-bottom: 4px solid #444; }
.vbar .down { margin: auto 0 17px; }
.vbar .down i { border-bottom: 0; border-top: 4px solid #333; }
.vbar .thumb { height: 48%; border: 1px solid #999; border-radius: 2px; background: linear-gradient(90deg, #f3f3f3, #e2e2e4 45%, #c8c8cc 50%, #d5d5d8); display: grid; place-items: center; }
.vbar .thumb i { width: 8px; height: 8px; background: repeating-linear-gradient(#666 0 1px, transparent 1px 3px); }

.status { flex: none; margin-top: 13px; height: 22px; }
.actions { flex: none; display: flex; margin-top: 6px; padding-left: 3px; }
.actions button { height: 22px; border: 1px solid #707070; border-radius: 3px; background: linear-gradient(#f3f3f3, #ebebeb 48%, #dddddd 50%, #cfcfcf); }
.setb { width: 79px; }
.setb span { font: 10px/16px "DejaVu Sans Mono", monospace; }
.actions .apply { width: 78px; margin-left: 459px; border-color: #1f93c4; box-shadow: inset 0 0 0 1px #48d3f5; background: linear-gradient(#eef8fd, #b9e0f5); }

.brand { position: absolute; right: 5px; bottom: 5px; width: 315px; height: 92px; background: #fff; display: flex; overflow: hidden; }
.bt { margin-left: 16px; flex: 1; min-width: 0; white-space: nowrap; }
.cn { font: 500 33px/43px "Noto Sans CJK SC", sans-serif; color: #333; }
.bt hr { margin: 1px 0 0; border: 0; height: 2px; width: 163px; background: #dc241f; }
.en { display: flex; justify-content: space-between; font: 34px/46px Lato, sans-serif; color: #707070; width: 168px; }
</style>
